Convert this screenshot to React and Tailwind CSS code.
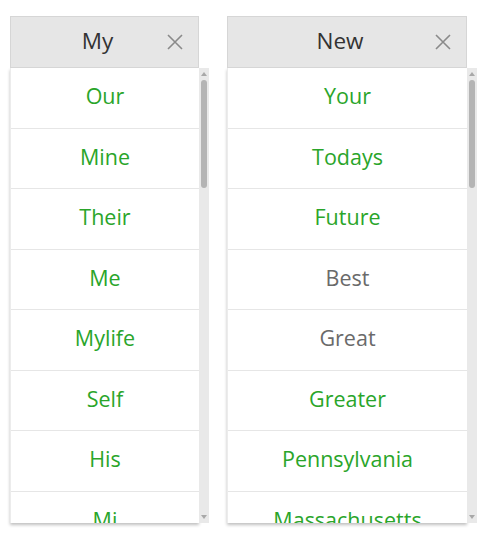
import React from "react";

const left = [
  { t: "Our", g: true },
  { t: "Mine", g: true },
  { t: "Their", g: true },
  { t: "Me", g: true },
  { t: "Mylife", g: true },
  { t: "Self", g: true },
  { t: "His", g: true },
  { t: "Mi", g: true },
];

const right = [
  { t: "Your", g: true },
  { t: "Todays", g: true },
  { t: "Future", g: true },
  { t: "Best", g: false },
  { t: "Great", g: false },
  { t: "Greater", g: true },
  { t: "Pennsylvania", g: true },
  { t: "Massachusetts", g: true },
];

function CloseIcon() {
  return (
    <svg width="18" height="18" viewBox="0 0 18 18" className="shrink-0">
      <path d="M2 2 L16 16 M16 2 L2 16" stroke="#8a8a8a" strokeWidth="1.6" fill="none" />
    </svg>
  );
}

function Scrollbar() {
  return (
    <div className="w-[10px] h-full bg-[#e9e9e9] flex flex-col items-center">
      <svg width="8" height="8" viewBox="0 0 8 8" className="mt-[2px]">
        <path d="M1 6 L4 2 L7 6 Z" fill="#a8a8a8" />
      </svg>
      <div className="mt-[2px] w-[6px] h-[108px] rounded-[3px] bg-[#b4b4b4]" />
      <div className="flex-1" />
      <svg width="8" height="8" viewBox="0 0 8 8" className="mb-[2px]">
        <path d="M1 2 L4 6 L7 2 Z" fill="#a8a8a8" />
      </svg>
    </div>
  );
}

function Column({ title, items, width }) {
  return (
    <div className="flex flex-col">
      <div
        className="h-[52px] bg-[#e6e6e6] border border-[#d6d6d6] flex items-center justify-center relative"
        style={{ width }}
      >
        <span className="text-[22.5px] text-[#333] pr-[14px] pb-[3px]">{title}</span>
        <div className="absolute right-[14px] top-[16px]">
          <CloseIcon />
        </div>
      </div>
      <div className="flex h-[455px]">
        <div
          className="h-full overflow-hidden bg-white border-l border-[#ececec] shadow-[0_2px_3px_rgba(0,0,0,0.25)]"
          style={{ width }}
        >
          {items.map((it) => (
            <div
              key={it.t}
              className={
                "h-[60.5px] shrink-0 border-b border-[#e6e6e6] flex items-center justify-center text-[21.5px] pb-[3px] " +
                (it.g ? "text-[#2aa52a]" : "text-[#6a6a6a]")
              }
            >
              {it.t}
            </div>
          ))}
        </div>
        <Scrollbar />
      </div>
    </div>
  );
}

export default function App() {
  return (
    <div
      className="w-[483px] h-[540px] bg-white pt-[16px] pl-[10px] flex gap-[18px]"
      style={{ fontFamily: '"Open Sans", "Noto Sans", sans-serif' }}
    >
      <Column title="My" items={left} width={189} />
      <Column title="New" items={right} width={240} />
    </div>
  );
}
